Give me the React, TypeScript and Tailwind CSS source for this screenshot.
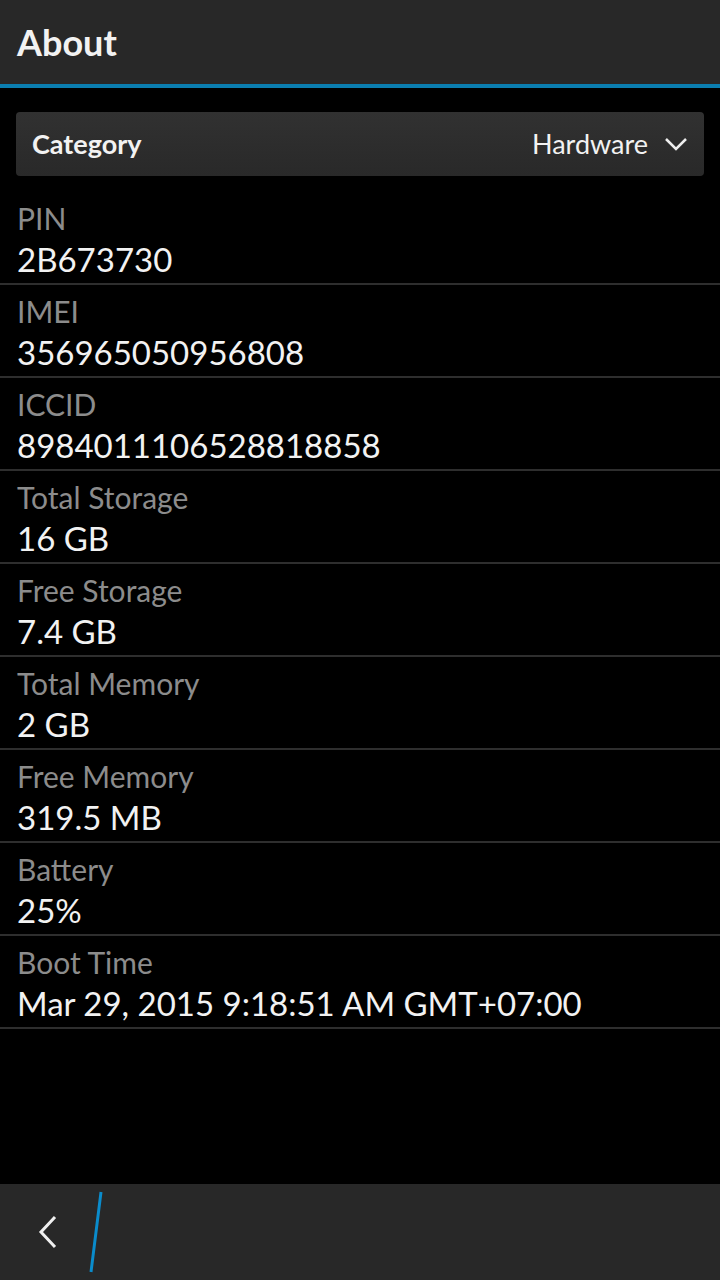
import React from 'react';

const rows: { label: string; value: string }[] = [
  { label: 'PIN', value: '2B673730' },
  { label: 'IMEI', value: '356965050956808' },
  { label: 'ICCID', value: '8984011106528818858' },
  { label: 'Total Storage', value: '16 GB' },
  { label: 'Free Storage', value: '7.4 GB' },
  { label: 'Total Memory', value: '2 GB' },
  { label: 'Free Memory', value: '319.5 MB' },
  { label: 'Battery', value: '25%' },
  { label: 'Boot Time', value: 'Mar 29, 2015 9:18:51 AM GMT+07:00' },
];

const App: React.FC = () => {
  return (
    <div className="flex h-[1280px] w-[720px] flex-col bg-black font-['Lato',sans-serif] text-[#f2f2f2]">
      {/* title bar */}
      <div className="flex h-[84px] items-center bg-[#282828] pl-[17px]">
        <h1 className="text-[36px] font-bold leading-none">About</h1>
      </div>
      <div className="h-1 bg-[#0b7eb0]" />

      <div className="flex-1 pt-6">
        <div className="mx-4 flex h-16 items-center justify-between rounded bg-gradient-to-b from-[#313131] to-[#292929] pl-4 pr-4">
          <span className="text-[27px] font-bold">Category</span>
          <div className="flex items-center gap-4">
            <span className="text-[27px]">Hardware</span>
            <svg width="24" height="16" viewBox="0 0 24 16" fill="none" stroke="#eeeeee" strokeWidth="2.5">
              <path d="M2 3l10 10L22 3" />
            </svg>
          </div>
        </div>

        <div className="mt-4">
          {rows.map((row) => (
            <div key={row.label} className="flex h-[93px] flex-col border-b-2 border-[#2e2e2e] pl-[17px] pt-[8px]">
              <span className="text-[30px] leading-[36px] text-[#8c8c8c]">{row.label}</span>
              <span className="mt-[4px] text-[33px] leading-[38px]">{row.value}</span>
            </div>
          ))}
        </div>
      </div>

      {/* action bar */}
      <div className="flex h-24 items-center bg-[#282828]">
        <svg className="ml-[38px]" width="20" height="34" viewBox="0 0 20 34" fill="none" stroke="#f0f0f0" strokeWidth="3">
          <path d="M17 2L3 17l14 15" />
        </svg>
        <svg className="ml-[30px]" width="16" height="82" viewBox="0 0 16 82" fill="none" stroke="#0a8ccc" strokeWidth="3">
          <path d="M13 1L3 81" />
        </svg>
      </div>
    </div>
  );
};

export default App;
